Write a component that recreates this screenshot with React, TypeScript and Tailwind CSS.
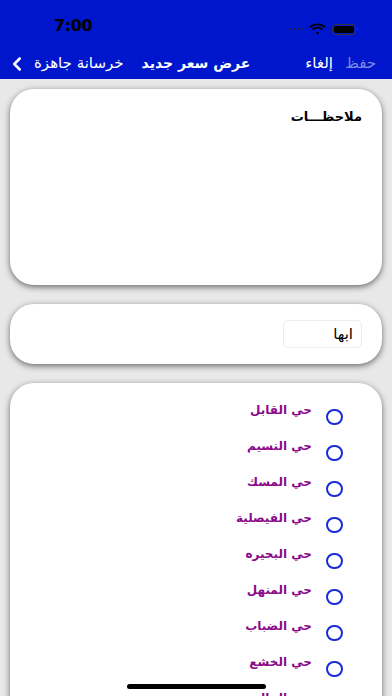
import { ChevronLeft } from 'lucide-react';

const areas = [
  'حي القابل',
  'حي النسيم',
  'حي المسك',
  'حي الفيصلية',
  'حي البحيره',
  'حي المنهل',
  'حي الضباب',
  'حي الخشع',
  'حي الخالدية',
];

function StatusBar() {
  return (
    <div className="h-[48px] flex items-end justify-between pb-[10px] pl-[54px] pr-[34px]">
      <span className="text-[16px] font-semibold text-black tracking-tight">7:00</span>
      <div className="flex items-center gap-[6px] mb-[3px]">
        <div className="flex gap-[2px] items-center">
          <div className="w-[2px] h-[2px] rounded-full bg-[#223]" />
          <div className="w-[2px] h-[2px] rounded-full bg-[#223]" />
          <div className="w-[2px] h-[2px] rounded-full bg-[#223]" />
          <div className="w-[2px] h-[2px] rounded-full bg-[#223]" />
        </div>
        <svg width="17" height="12" viewBox="0 0 17 12">
          <path d="M8.5 2.2c2.6 0 5 1 6.8 2.7l1.2-1.3C14.4 1.6 11.6.4 8.5.4S2.6 1.6.5 3.6l1.2 1.3C3.5 3.2 5.9 2.2 8.5 2.2z" fill="#000" />
          <path d="M8.5 5.6c1.6 0 3.1.6 4.3 1.7L14 6c-1.5-1.4-3.4-2.2-5.5-2.2S4.5 4.6 3 6l1.2 1.3c1.2-1.1 2.7-1.7 4.3-1.7z" fill="#000" />
          <path d="M8.5 9c.7 0 1.3.3 1.8.7L8.5 11.6 6.7 9.7c.5-.4 1.1-.7 1.8-.7z" fill="#000" />
        </svg>
        <div className="flex items-center">
          <div className="w-[24px] h-[11px] rounded-[4px] border border-[#333] p-[1px]">
            <div className="w-full h-full rounded-[2px] bg-black" />
          </div>
          <div className="w-[1.5px] h-[4px] bg-[#333] rounded-r-sm ml-[1px]" />
        </div>
      </div>
    </div>
  );
}

function NavBar() {
  return (
    <div className="h-[31px] flex items-center justify-between pl-[6px] pr-[16px] text-white text-[15px]">
      <div className="flex items-center gap-[6px]">
        <ChevronLeft className="w-[22px] h-[22px]" strokeWidth={2.8} />
        <div className="flex items-center gap-[18px]">
          <span>خرسانة جاهزة</span>
          <span className="font-bold text-[14px]">عرض سعر جديد</span>
        </div>
      </div>
      <div className="flex items-center gap-[12px]">
        <span>إلغاء</span>
        <span className="text-[#7f8be6]">حفظ</span>
      </div>
    </div>
  );
}

function Card({ className, children }: { className: string; children?: React.ReactNode }) {
  return (
    <div
      className={
        'mx-[10px] bg-white rounded-[24px] shadow-[0_2px_6px_rgba(0,0,0,0.55)] ' + className
      }
    >
      {children}
    </div>
  );
}

export default function App() {
  return (
    <div
      className="w-[392px] h-[696px] overflow-hidden bg-[#e8e8e8] relative"
      style={{ fontFamily: '"DejaVu Sans", "Noto Sans", sans-serif' }}
    >
      <div className="bg-[#0016cc]">
        <StatusBar />
        <NavBar />
      </div>

      <div className="pt-[10px] flex flex-col gap-[19px]" dir="rtl">
        <Card className="h-[196px] pt-[18px] pr-[20px]">
          <div className="text-[13px] font-bold text-black tracking-[1px]">ملاحظـــات</div>
        </Card>

        <Card className="h-[60px] flex items-center pr-[20px]">
          <div className="w-[79px] h-[28px] rounded-[5px] border border-[#ececec] flex items-center px-[8px] text-[15px] text-black">
            ابها
          </div>
        </Card>

        <Card className="h-[340px] pt-[18px] pr-[70px]">
          <div className="flex flex-col gap-[16px]">
            {areas.map((a) => (
              <div key={a} className="flex items-start h-[20px]">
                <span className="text-[12px] font-bold text-[#8a0a8a]">{a}</span>
              </div>
            ))}
          </div>
        </Card>
      </div>

      <div className="absolute right-[49px] top-[409px] flex flex-col gap-[20px] pointer-events-none">
        {areas.slice(0, 8).map((a) => (
          <div key={a} className="w-[17px] h-[16px] rounded-full border-2 border-[#1a2ad8]" />
        ))}
      </div>

      <div className="absolute left-[127px] bottom-[7px] w-[139px] h-[5px] rounded-full bg-black" />
    </div>
  );
}
